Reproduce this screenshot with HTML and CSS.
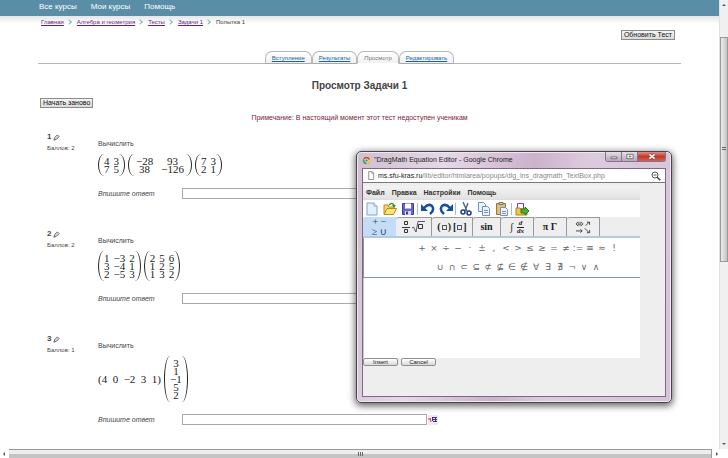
FILE: index.html
```html
<!DOCTYPE html>
<html lang="ru">
<head>
<meta charset="utf-8">
<title>Просмотр Задачи 1</title>
<link rel="stylesheet" href="styles.css">
</head>
<body>
<div class="frame">
<div class="page">
  <nav class="topnav"><a href="#">Все курсы</a><a href="#">Мои курсы</a><a href="#">Помощь</a></nav>
  <div class="content">
    <nav class="crumbs"><a href="#">Главная</a><i></i><a href="#">Алгебра и геометрия</a><i></i><a href="#">Тесты</a><i></i><a href="#">Задачи 1</a><i></i><span>Попытка 1</span></nav>
    <div class="update"><button class="btn" type="button">Обновить Тест</button></div>
    <nav class="tabs"><a href="#">Вступление</a><a href="#">Результаты</a><span>Просмотр</span><a href="#">Редактировать</a></nav>
    <h1>Просмотр Задачи 1</h1>
    <button class="btn" type="button">Начать заново</button>
    <p class="note">Примечание: В настоящий момент этот тест недоступен ученикам</p>
    <section class="question">
      <div class="info"><h2>1 <svg viewBox="0 0 8 8"><path d="M1 7l1-3 3-3 2 2-3 3z" fill="#ddd" stroke="#555"/></svg></h2><p>Баллов: 2</p></div>
      <div class="body">
        <p>Вычислить</p>
        <div class="math">
          <table class="matrix"><tr><td>4</td><td>3</td></tr><tr><td>7</td><td>5</td></tr></table>
          <table class="matrix wide"><tr><td>−28</td><td>93</td></tr><tr><td>38</td><td>−126</td></tr></table>
          <table class="matrix"><tr><td>7</td><td>3</td></tr><tr><td>2</td><td>1</td></tr></table>
        </div>
        <div class="answer"><label for="a1">Впишите ответ</label><input id="a1" type="text"></div>
      </div>
    </section>
    <section class="question">
      <div class="info"><h2>2 <svg viewBox="0 0 8 8"><path d="M1 7l1-3 3-3 2 2-3 3z" fill="#ddd" stroke="#555"/></svg></h2><p>Баллов: 2</p></div>
      <div class="body">
        <p>Вычислить</p>
        <div class="math">
          <table class="matrix"><tr><td>1</td><td>−3</td><td>2</td></tr><tr><td>3</td><td>−4</td><td>1</td></tr><tr><td>2</td><td>−5</td><td>3</td></tr></table>
          <table class="matrix"><tr><td>2</td><td>5</td><td>6</td></tr><tr><td>1</td><td>2</td><td>5</td></tr><tr><td>1</td><td>3</td><td>2</td></tr></table>
        </div>
        <div class="answer"><label for="a2">Впишите ответ</label><input id="a2" type="text"></div>
      </div>
    </section>
    <section class="question">
      <div class="info"><h2>3 <svg viewBox="0 0 8 8"><path d="M1 7l1-3 3-3 2 2-3 3z" fill="#ddd" stroke="#555"/></svg></h2><p>Баллов: 1</p></div>
      <div class="body">
        <p>Вычислить</p>
        <div class="math">
          <span class="row">(4&nbsp; 0&nbsp; −2&nbsp; 3&nbsp; 1)</span>
          <table class="matrix"><tr><td>3</td></tr><tr><td>1</td></tr><tr><td>−1</td></tr><tr><td>5</td></tr><tr><td>2</td></tr></table>
        </div>
        <div class="answer"><label for="a3">Впишите ответ</label><input id="a3" type="text"><button class="eq" type="button" aria-label="Редактор формул"><svg viewBox="0 0 10 10"><path d="M0 4h3M2 3l1 4" stroke="#d0405a" fill="none"/><path d="M4 2.500h5M4 4.500h5M5 6.500h4M4.500 2v4M7.500 2v5" stroke="#35308a" fill="none"/></svg></button></div>
      </div>
    </section>
  </div>
</div>
<div class="vbar"><i class="up"></i><div class="vthumb"></div><i class="down"></i></div>
<div class="hbar"><i class="left"></i><div class="hthumb"></div><i class="right"></i></div>
</div>

<div class="window" role="dialog" aria-labelledby="wtitle">
  <header class="titlebar">
    <svg class="chrome" viewBox="0 0 12 12"><circle cx="6" cy="6" r="5" fill="#e9c43c"/><path d="M1.700 3.500A5 5 0 0 1 10.800 4.500L6 5z" fill="#d8473a"/><path d="M1.700 3.500A5 5 0 0 0 5.500 11L7 7 5 7z" fill="#4a9d4f"/><circle cx="6" cy="6" r="2.200" fill="#4b86c8" stroke="#fff"/></svg>
    <span id="wtitle">"DragMath Equation Editor - Google Chrome</span>
    <div class="controls">
      <button type="button" aria-label="Свернуть"><svg viewBox="0 0 10 8"><path d="M1.500 4.500h7v2h-7z" fill="#fff" stroke="#666"/></svg></button>
      <button type="button" aria-label="Развернуть"><svg viewBox="0 0 10 8"><path d="M1.500 1.500h7v5h-7z" fill="#fff" stroke="#666"/><path d="M4 3.500h2v1H4z" fill="none" stroke="#666"/></svg></button>
      <button class="close" type="button" aria-label="Закрыть"><svg viewBox="0 0 10 8"><path d="M2 1.500l6 5M8 1.500l-6 5" stroke="#733" stroke-width="3"/><path d="M2 1.500l6 5M8 1.500l-6 5" stroke="#fff" stroke-width="2"/></svg></button>
    </div>
  </header>
  <div class="client">
    <div class="url">
      <svg viewBox="0 0 8 10"><path d="M1.500 .5h3.500l2 2v7H1.500zM5 .5v2h2" fill="#fff" stroke="#888"/></svg>
      <span><b>ms.sfu-kras.ru</b>/lib/editor/htmlarea/popups/dlg_ins_dragmath_TextBox.php</span>
      <svg class="zoom" viewBox="0 0 10 10"><circle cx="4" cy="4" r="3" fill="#fff" stroke="#555"/><path d="M2.500 4h3" stroke="#555"/><path d="M6.200 6.200l3 3" stroke="#444" stroke-width="1.600"/></svg>
    </div>
    <div class="applet">
      <div class="menubar"><button type="button">Файл</button><button type="button">Правка</button><button type="button">Настройки</button><button type="button">Помощь</button></div>
      <div class="toolbar">
        <button type="button" aria-label="Новый"><svg viewBox="0 0 14 14"><path d="M2 1h7l3 3v9H2z" fill="#e3effb" stroke="#7fa3cf"/><path d="M9 1v3h3" fill="#fff" stroke="#7fa3cf"/></svg></button>
        <button type="button" aria-label="Открыть"><svg viewBox="0 0 14 14"><path d="M1 12V3h4l1 2h5v2" fill="#f6d667" stroke="#b78d1b"/><path d="M1 12.500l3-6h9.500l-3 6z" fill="#ffe27a" stroke="#b78d1b"/><path d="M6 3q3-3 5 0" fill="none" stroke="#2c9a3a" stroke-width="1.500"/><path d="M9 3h4l-2 3z" fill="#2c9a3a"/></svg></button>
        <button type="button" aria-label="Сохранить"><svg viewBox="0 0 14 14"><path d="M1.500 1.500h11v11h-11z" fill="#6668c4" stroke="#3b3c93"/><path d="M4 1.500h6v5H4z" fill="#fff"/><path d="M4 9h6v4H4z" fill="#d9daf2"/><path d="M5 9.500h2v3H5z" fill="#3b3c93"/></svg></button><i></i>
        <button type="button" aria-label="Отменить"><svg viewBox="0 0 14 14"><path d="M3 6q4-5 8-2 3 4-2 8" fill="none" stroke="#174f9d" stroke-width="2.500"/><path d="M0 2v7h7z" fill="#174f9d"/></svg></button>
        <button type="button" aria-label="Повторить"><svg viewBox="0 0 14 14"><path d="M11 6q-4-5-8-2-3 4 2 8" fill="none" stroke="#174f9d" stroke-width="2.500"/><path d="M14 2v7H7z" fill="#174f9d"/></svg></button><i></i>
        <button type="button" aria-label="Вырезать"><svg viewBox="0 0 14 14"><path d="M4 0l4 9M9 1L6 9" fill="none" stroke="#596b86" stroke-width="1.500"/><circle cx="4" cy="10" r="2" fill="none" stroke="#173c8c" stroke-width="1.500"/><circle cx="10" cy="11" r="2" fill="none" stroke="#173c8c" stroke-width="1.500"/></svg></button>
        <button type="button" aria-label="Копировать"><svg viewBox="0 0 14 14"><path d="M1.500 .5h5l2 2v7h-7z" fill="#eaf2fc" stroke="#7591bf"/><path d="M5.500 4.500h5l2 2v7h-7zM7 8.500h4M7 10.500h4" fill="#eaf2fc" stroke="#7591bf"/></svg></button>
        <button type="button" aria-label="Вставить"><svg viewBox="0 0 14 14"><path d="M1.500 1.500h9v11h-9z" fill="#e2bd72" stroke="#987437"/><path d="M4 .5h4v2H4z" fill="#ccc" stroke="#777"/><path d="M5.500 5.500h5l2 2v6h-7zM7 9.500h4M7 11.500h4" fill="#edf3fb" stroke="#7591bf"/></svg></button><i></i>
        <button type="button" aria-label="Экспорт"><svg viewBox="0 0 14 14"><path d="M2.500 1.500h6v7h-6z" fill="#fff" stroke="#93a"/><path d="M1 6h4l1 1h6v6H1z" fill="#efc83f" stroke="#a88423"/><path d="M6 7h4V5l4 4-4 4v-2H6z" fill="#4cb034" stroke="#267a1c"/></svg></button>
      </div>
      <div class="cats">
        <button class="on" type="button">+ −<br>≥ ∪</button>
        <button type="button" aria-label="Дроби и корни"><svg viewBox="0 0 24 14"><path d="M2.500 1.500h3v3h-3zM2.500 9.500h3v3h-3zM0 7.500h8M16.500 4.500h4v4h-4z" fill="none" stroke="#333"/><path d="M10 8l1.500-1 2.500 5 2-10.500h7" fill="none" stroke="#333" stroke-width=".8"/></svg></button>
        <button type="button" class="brackets">(<i></i>)<span>[</span><i></i>]</button>
        <button type="button">sin</button>
        <button class="deriv" type="button"><span>∫</span><span class="frac"><span>d</span><span>dx</span></span></button>
        <button type="button">π Γ</button>
        <button type="button" aria-label="Стрелки"><svg viewBox="0 0 18 16"><path d="M3 3.500h4M3 5.500h4M3.500 2L1 4.500 3.500 7M6.500 2L9 4.500 6.500 7M12 6.500l4-4M13.500 2.500h3v3M1 12.500h7M6 10.500l2 2-2 2M11 9.500l5 5M16.500 11.500v3h-3" fill="none" stroke="#333"/></svg></button>
      </div>
      <div class="palette">
        <div><button>+</button><button>×</button><button>÷</button><button>−</button><button>·</button><button>±</button><button>,</button><button>&lt;</button><button>&gt;</button><button>≤</button><button>≥</button><button>=</button><button>≠</button><button>:=</button><button>≡</button><button>≈</button><button>!</button></div>
        <div><button>∪</button><button>∩</button><button>⊂</button><button>⊆</button><button>⊄</button><button>⊈</button><button>∈</button><button>∉</button><button>∀</button><button>∃</button><button>∄</button><button>¬</button><button>∨</button><button>∧</button></div>
      </div>
      <div class="canvas"></div>
    </div>
    <div class="actions"><button type="button">Insert</button><button type="button">Cancel</button></div>
  </div>
</div>
</body>
</html>
```

FILE: styles.css
```css
* { box-sizing: border-box; }
body { margin: 0; overflow: hidden; background: #fff; color: #444; font: 7px/12px "Liberation Sans", Arial, sans-serif; }
h1, h2, p { margin: 0; font-weight: normal; }
button { margin: 0; padding: 0; border: 0; background: none; color: inherit; font: inherit; }
svg { display: block; }

.frame { display: grid; grid-template: minmax(0, 1fr) 9px / minmax(0, 1fr) 9px; height: 100vh; }
.page { overflow: hidden; background: linear-gradient(#e4e6e7, #fff 8px) 0 16px no-repeat; }
.topnav { display: flex; gap: 14px; height: 16px; padding-left: 39px; background: #5a8ea7; }
.topnav a { color: #fff; text-decoration: none; font-size: 8px; line-height: 13px; }
.content { padding: 0 38px; }

.crumbs { display: flex; align-items: center; height: 12px; padding-left: 3px; font-size: 6px; }
.crumbs a { color: #6a1b86; }
.crumbs i { width: 4px; height: 4px; margin: 0 6px 0 3px; border: solid #7fb7bb; border-width: 1px 1px 0 0; transform: rotate(45deg); }
.update { display: flex; justify-content: flex-end; padding: 2px 6px 0 0; }
.btn { display: block; height: 10px; padding: 0 2px; border: 1px solid #8b8b8b; background: linear-gradient(#f6f6f6, #dadada); color: #111; font-size: 7px; line-height: 8px; }
.content > .btn { margin-left: 2px; }

.tabs { display: flex; justify-content: center; height: 13px; margin-top: 11px; border-bottom: 1px solid #b5b5b5; font-size: 6px; }
.tabs a, .tabs span { height: 13px; padding: 0 6px; border: 1px solid #b8b8b8; border-bottom-color: #aaa; border-radius: 7px 7px 0 0; background: linear-gradient(#fff, #f1f1f1); color: #17659a; line-height: 12px; }
.tabs span { border-bottom-color: #fff; color: #777; }
h1 { padding: 15px 0 6px; text-align: center; font: bold 10px/13px "Liberation Sans", Arial, sans-serif; }
.note { padding-top: 4px; text-align: center; color: #7d2338; }

.question { display: grid; grid-template-columns: 51px minmax(0, 1fr); padding-left: 9px; margin-top: 29px; }
.note + .question { margin-top: 7px; }
.info { font-size: 6px; line-height: 11px; }
.info h2 { display: flex; align-items: center; gap: 2px; font-weight: bold; font-size: 8px; line-height: 12px; }
.info svg { width: 7px; height: 7px; }
.body { padding-top: 7px; }
.math { display: flex; align-items: center; gap: 3px; padding: 4px 0 12px; color: #222; font: 11px/8px "Liberation Serif", serif; }
.matrix { position: relative; border-spacing: 0; padding: 3px 4px; }
.matrix td { height: 8px; padding: 0 2px; text-align: center; }
.matrix.wide td { padding: 0 4px; }
.matrix::before, .matrix::after { content: ""; position: absolute; top: 0; bottom: 0; width: 5px; }
.matrix::before { left: 0; border-left: 1px solid #222; border-radius: 100% 0 0 100% / 50% 0 0 50%; }
.matrix::after { right: 0; border-right: 1px solid #222; border-radius: 0 100% 100% 0 / 0 50% 50% 0; }
.answer { display: flex; align-items: center; height: 11px; }
.answer label { flex: 0 0 84px; font-style: italic; }
.answer input { width: 245px; height: 11px; padding: 0 2px; border: 1px solid #a9a9a9; background: #fff; font: inherit; }
.eq { margin-left: 1px; background: #f0e9f5; }
.eq svg { width: 10px; height: 10px; }

.vbar, .hbar { display: flex; align-items: center; background: #f0f0f0; }
.vbar { flex-direction: column; padding: 4px 0; border-left: 1px solid #e2e2e2; }
.vthumb { width: 100%; height: 51%; margin-top: 31px; border: 1px solid #999; background: linear-gradient(90deg, #ececec, #c4c4c4); }
.hbar { grid-column: 1 / -1; padding: 0 10px 0 3px; background: #fff; }
.hthumb { flex: 1; height: 9px; margin: 0 4px; border-top: 1px solid #999; border-right: 1px solid #999; background: linear-gradient(#eee 50%, #c4c4c4 50%); }
.vthumb, .hthumb { display: flex; align-items: center; justify-content: center; }
.vthumb::after, .hthumb::after { content: ""; width: 5px; height: 4px; background: repeating-linear-gradient(90deg, #666 0 1px, transparent 1px 2px); }
.vthumb::after { background: repeating-linear-gradient(#666 0 1px, transparent 1px 2px); width: 4px; }
.up, .down { border: 2px solid transparent; }
.up { border-top: 0; border-bottom-color: #555; }
.down { margin-top: auto; border-bottom: 0; border-top-color: #555; }
.left, .right { border: 2px solid transparent; }
.left { border-left: 0; border-right-color: #555; }
.right { border-right: 0; border-left-color: #555; }

/* Pop-up browser window over the page */
.window { position: absolute; left: 356px; top: 151px; width: 316px; padding: 0 5px 5px; border: 1px solid #4b4450; border-radius: 5px; background: linear-gradient(100deg, #cfbfcf, #e6d8e8 25%, #cbb3cb 50%, #dccbdd 65%, #d5c3d8); box-shadow: 0 2px 7px 1px rgba(0, 0, 0, .6), inset 0 0 0 1px #f0e6f2; }
.titlebar { display: flex; align-items: center; height: 16px; color: #222; font-size: 7px; }
.chrome { width: 9px; height: 9px; margin-right: 3px; }
.controls { display: flex; align-self: flex-start; margin-left: auto; border: 1px solid #85738a; border-top: 0; border-radius: 0 0 3px 3px; overflow: hidden; }
.controls button { display: flex; align-items: center; justify-content: center; width: 16px; height: 9px; border-right: 1px solid #85738a; background: linear-gradient(#e7dde8, #b9a6bd); }
.controls svg { width: 10px; height: 7px; }
.controls .close { width: 27px; border: 0; background: linear-gradient(#dd9189, #c3382c 50%, #d4604f); }
.client { border: 1px solid #7d6a80; background: #eee; }
.url { display: flex; align-items: center; gap: 3px; height: 14px; padding: 0 4px; border-bottom: 1px solid #777; background: #fff; color: #888; font-size: 7px; white-space: nowrap; }
.url b { color: #222; font-weight: normal; }
.url svg { width: 8px; height: 9px; }
.url .zoom { width: 10px; height: 10px; margin-left: auto; }
.applet { width: 277px; margin-top: 3px; background: #fff; }
.menubar { display: flex; gap: 7px; height: 13px; padding-left: 3px; background: linear-gradient(#f3f3f3, #e2e2e2); color: #333; font-weight: bold; font-size: 7px; }
.toolbar { display: flex; align-items: center; height: 18px; border-top: 1px solid #ddd; }
.toolbar button { display: flex; justify-content: center; width: 18px; }
.toolbar svg { width: 14px; height: 14px; }
.toolbar i { width: 1px; height: 12px; margin-right: 1px; background: #a6bdd7; }
.cats { display: flex; height: 21px; border-bottom: 2px solid #b2c9df; background: #eee; color: #222; font: bold 10px/10px "Liberation Serif", "DejaVu Sans", serif; }
.cats button { display: flex; align-items: center; justify-content: center; width: 33px; border: 1px solid #999; border-width: 1px 1px 0 0; border-radius: 3px 0 0 0; }
.cats button:nth-child(2) { width: 36px; }
.cats button:nth-child(3) { width: 41px; }
.cats button:nth-child(4) { width: 28px; }
.cats .on { border: 0; background: #c4dcf6; color: #26405e; font-weight: normal; }
.cats svg { width: 24px; height: 14px; }
.brackets i { width: 5px; height: 5px; margin: 0 1px; border: 1px solid #555; }
.brackets span { margin-left: 2px; }
.cats .deriv { gap: 4px; }
.frac { font-size: 7px; font-style: italic; line-height: 7px; }
.frac span { display: block; }
.frac span + span { border-top: 1px solid #222; }
.palette { height: 40px; padding-top: 3px; border: solid #8196ad; border-width: 0 0 1px 1px; color: #666; font: 9px/15px "DejaVu Sans", sans-serif; }
.palette div { display: flex; justify-content: center; padding: 0 0 4px 32px; }
.palette button { width: 12px; height: 15px; }
.canvas { height: 80px; border-left: 1px solid #b9cde1; }
.actions { display: flex; gap: 3px; padding-bottom: 30px; }
.actions button { width: 35px; height: 8px; border: 1px solid #909090; border-radius: 2px; background: linear-gradient(#fff, #d8d8d8); color: #222; font-size: 6px; line-height: 6px; }
```
